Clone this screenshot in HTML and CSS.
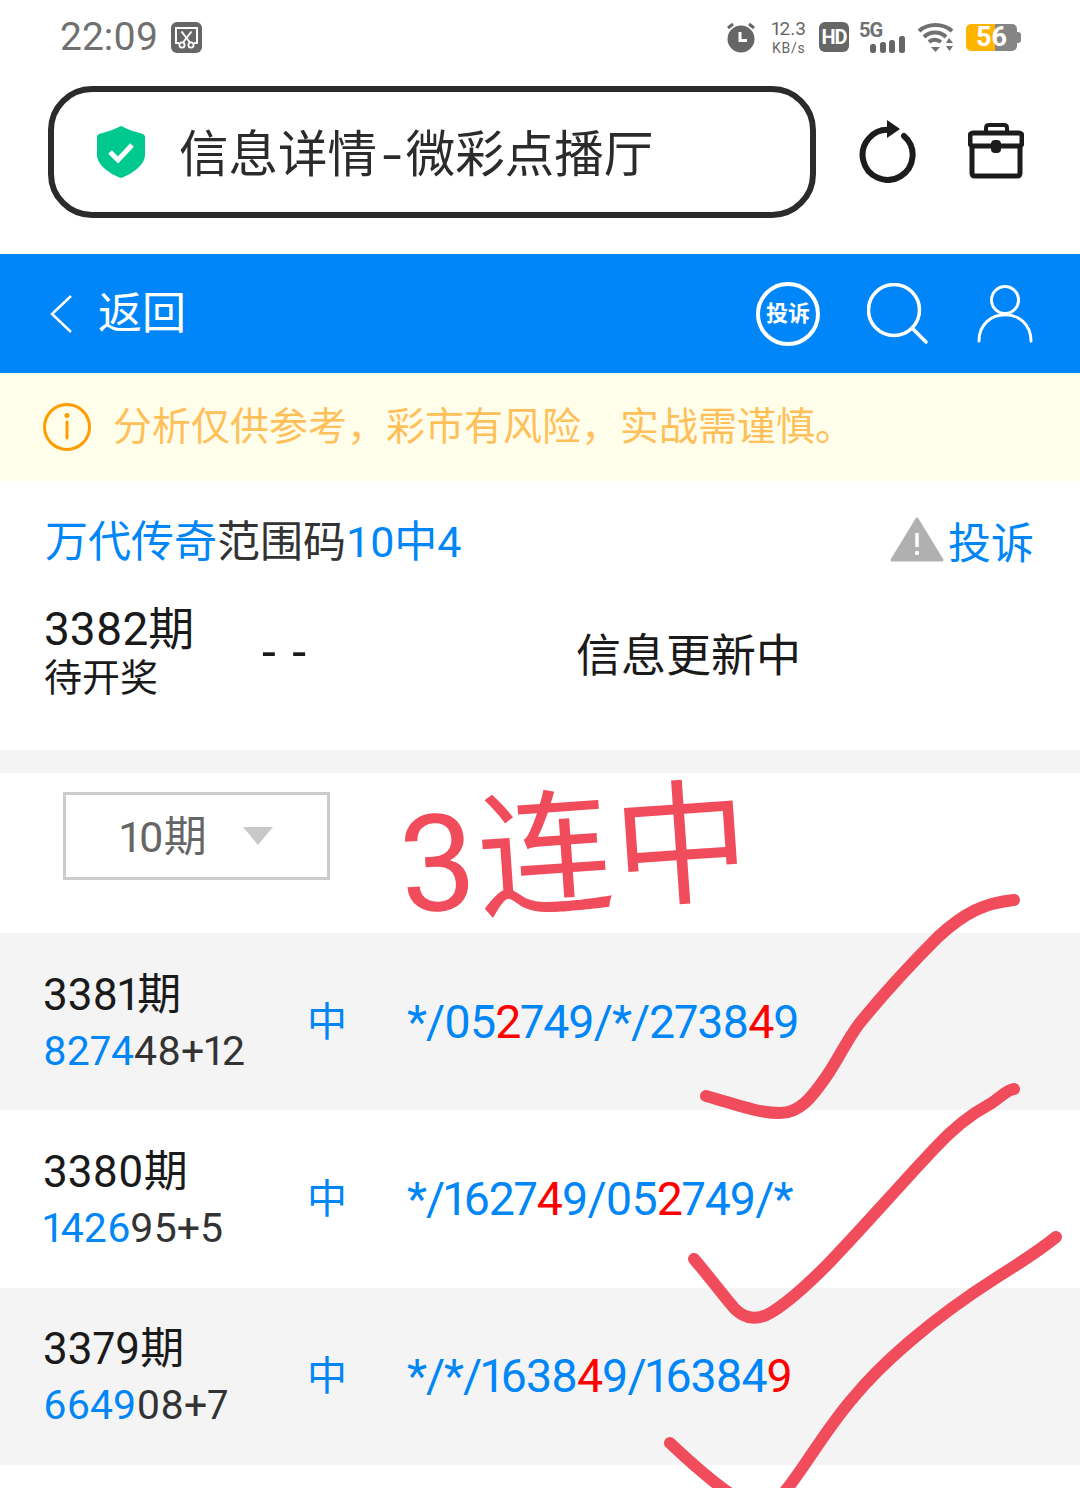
FILE: index.html
```html
<!DOCTYPE html>
<html lang="zh-CN">
<head>
    <meta charset="UTF-8">
    <title>信息详情-微彩点播厅</title>
    <link rel="stylesheet" href="styles.css">
</head>
<body>
<div class="page">
    <header class="status-bar">
        <div class="status-left">
            <span class="clock">22:09</span>
            <svg class="shot-icon" width="31" height="31" viewBox="0 0 31 31">
                <rect width="31" height="31" rx="6" fill="#666"/>
                <path d="M8 21H5V6H26V21H23" fill="none" stroke="#fff" stroke-width="2"/>
                <path d="M10.500 9.500L19 20.500M20.500 9.500L12 20.500" fill="none" stroke="#fff" stroke-width="2"/>
                <circle cx="11" cy="23" r="2.600" fill="#666" stroke="#fff" stroke-width="1.800"/>
                <circle cx="20" cy="23" r="2.600" fill="#666" stroke="#fff" stroke-width="1.800"/>
            </svg>
        </div>
        <div class="status-right">
            <svg width="30" height="32" viewBox="0 0 30 32">
                <path d="M2 7L7 3M28 7L23 3" stroke="#666" stroke-width="3"/>
                <circle cx="15" cy="18" r="13.500" fill="#666"/>
                <path d="M14 11V19.500H21" fill="none" stroke="#fff" stroke-width="3"/>
            </svg>
            <div class="net-speed"><span>12.3</span><span class="unit">KB/s</span></div>
            <span class="hd">HD</span>
            <div class="signal">
                <span class="five-g">5G</span>
                <svg width="36" height="17" viewBox="0 0 36 17">
                    <rect x="0" y="8" width="6" height="9" rx="2.500" fill="#666"/>
                    <rect x="10" y="6" width="6" height="11" rx="2.500" fill="#666"/>
                    <rect x="19" y="4" width="6" height="13" rx="2.500" fill="#666"/>
                    <rect x="29" y="0" width="6" height="17" rx="2.500" fill="#666"/>
                </svg>
            </div>
            <svg width="38" height="30" viewBox="0 0 38 30">
                <path d="M2 9C11 1 26 1 35 9" fill="none" stroke="#707070" stroke-width="4"/>
                <path d="M7 15C13 9 23 9 29 15" fill="none" stroke="#707070" stroke-width="4"/>
                <path d="M12 20C15 17 20 17 24 20" fill="none" stroke="#707070" stroke-width="4"/>
                <path d="M14 25H23L18.500 30Z" fill="#707070"/>
                <path d="M32 16L29 21H36Z M29 24H36L32.500 29Z" fill="#707070"/>
            </svg>
            <div class="battery"><span class="battery-num">56</span></div>
        </div>
    </header>

    <div class="addr-row">
        <div class="addr-box">
            <svg width="48" height="52" viewBox="0 0 48 52">
                <path d="M24 0C30 3 38 6 46 8Q48 9 48 11V29C48 39 35 48 24 52C13 48 0 39 0 29V11Q0 9 2 8C10 6 18 3 24 0Z" fill="#00c98f"/>
                <path d="M13 26L21 34L35 19" fill="none" stroke="#fff" stroke-width="5"/>
            </svg>
            <span class="addr-title">信息详情<span class="addr-dash">-</span>微彩点播厅</span>
        </div>
        <div class="addr-actions">
            <svg width="60" height="64" viewBox="0 0 60 64">
                <path d="M33 11A25 25 0 1 0 47 17" fill="none" stroke="#1c1c1c" stroke-width="6" stroke-linecap="round"/>
                <path d="M30 1L43 10L30 19Z" fill="#1c1c1c"/>
            </svg>
            <svg width="56" height="56" viewBox="0 0 56 56">
                <path d="M18 9V5Q18 2 21 2H36Q39 2 39 5V9" fill="none" stroke="#1c1c1c" stroke-width="4"/>
                <rect x="2" y="10" width="52" height="13" rx="3" fill="none" stroke="#1c1c1c" stroke-width="5"/>
                <path d="M4 22V50Q4 53 7 53H49Q52 53 52 50V22" fill="none" stroke="#1c1c1c" stroke-width="5"/>
                <rect x="23" y="17" width="10" height="13" rx="4" fill="#1c1c1c"/>
            </svg>
        </div>
    </div>

    <nav class="nav">
        <div class="nav-back">
            <svg width="24" height="40" viewBox="0 0 24 40">
                <path d="M22 2L3 20L22 38" fill="none" stroke="#fff" stroke-width="2.500"/>
            </svg>
            <span class="nav-back-text">返回</span>
        </div>
        <div class="nav-icons">
            <span class="complain-badge">投诉</span>
            <svg width="62" height="62" viewBox="0 0 62 62">
                <circle cx="27" cy="27" r="25.500" fill="none" stroke="#fff" stroke-width="3.500"/>
                <path d="M45 45L59 59" stroke="#fff" stroke-width="3.500" stroke-linecap="round"/>
            </svg>
            <svg width="58" height="60" viewBox="0 0 58 60">
                <circle cx="29" cy="16" r="13.500" fill="none" stroke="#fff" stroke-width="3"/>
                <path d="M3 57C3 22 55 22 55 57" fill="none" stroke="#fff" stroke-width="3" stroke-linecap="round"/>
            </svg>
        </div>
    </nav>

    <div class="notice">
        <svg width="50" height="50" viewBox="0 0 50 50">
            <circle cx="25" cy="25" r="22.500" fill="none" stroke="#ff9c00" stroke-width="3"/>
            <circle cx="25" cy="13.500" r="2.500" fill="#ff9c00"/>
            <path d="M25 20V36" stroke="#ff9c00" stroke-width="3" stroke-linecap="round"/>
        </svg>
        <span class="notice-text">分析仅供参考，彩市有风险，实战需谨慎。</span>
    </div>

    <section class="plan">
        <div class="plan-head">
            <h1 class="plan-title"><span class="blue">万代传奇</span>范围码<span class="blue">10中4</span></h1>
            <div class="plan-report">
                <svg width="54" height="46" viewBox="0 0 54 46">
                    <path d="M27 2L52 43H2Z" fill="#b0b0b0" stroke="#b0b0b0" stroke-width="3" stroke-linejoin="round"/>
                    <path d="M27 16V30" stroke="#fff" stroke-width="3.500"/>
                    <circle cx="27" cy="36" r="2.200" fill="#fff"/>
                </svg>
                <span class="blue plan-report-text">投诉</span>
            </div>
        </div>
        <div class="plan-current">
            <div class="plan-issue">
                <div class="issue-no">3382期</div>
                <div class="issue-state">待开奖</div>
            </div>
            <div class="plan-dash">- -</div>
            <div class="plan-msg">信息更新中</div>
        </div>
    </section>

    <section class="filter">
        <div class="select">
            <span class="select-text">10期</span>
            <i class="select-arrow"></i>
        </div>
    </section>

    <section class="rows">
        <div class="row row-gray">
            <div>
                <div class="row-issue">3381期</div>
                <div class="row-open"><span class="blue">8274</span>48+12</div>
            </div>
            <div class="row-hit">中</div>
            <div class="row-code">*/05<em>2</em>749/*/2738<em>4</em>9</div>
        </div>
        <div class="row">
            <div>
                <div class="row-issue">3380期</div>
                <div class="row-open"><span class="blue">1426</span>95+5</div>
            </div>
            <div class="row-hit">中</div>
            <div class="row-code">*/1627<em>4</em>9/05<em>2</em>749/*</div>
        </div>
        <div class="row row-gray">
            <div>
                <div class="row-issue">3379期</div>
                <div class="row-open"><span class="blue">6649</span>08+7</div>
            </div>
            <div class="row-hit">中</div>
            <div class="row-code">*/*/1638<em>4</em>9/16384<em>9</em></div>
        </div>
    </section>

    <div class="scrawl-text">3连中</div>
    <svg class="scrawl" width="1080" height="1488" viewBox="0 0 1080 1488">
        <path d="M706 1096C735 1104 757 1113 780 1113C800 1113 812 1097 826 1077C838 1060 845 1043 859 1024C880 998 910 965 938 937C965 912 985 903 1014 900"/>
        <path d="M694 1259C712 1280 725 1298 735 1309C745 1319 758 1321 772 1312C790 1301 810 1282 826 1266C860 1231 900 1185 934 1149C955 1126 975 1112 990 1104C1000 1098 1006 1090 1014 1089"/>
        <path d="M670 1443C690 1462 710 1480 732 1495M782 1495C800 1475 825 1430 853 1398C880 1365 930 1320 996 1278C1020 1263 1040 1250 1056 1237"/>
    </svg>
</div>
</body>
</html>
```

FILE: styles.css
```css
*{
    box-sizing:border-box;
}
html,body{
    margin:0;
    padding:0;
    background:#fff;
}
.page{
    position:relative;
    width:1080px;
    height:1488px;
    overflow:hidden;
    font-family:Roboto,"Noto Sans CJK SC",sans-serif;
    font-variant-numeric:proportional-nums;
    color:#1a1a1a;
}
.blue{
    color:#0086f7;
}
svg{
    display:block;
    flex:none;
}

/* status bar */
.status-bar{
    height:74px;
    display:flex;
    justify-content:space-between;
    align-items:center;
    padding:0 63px 0 60px;
    color:#666;
}
.status-left{
    display:flex;
    align-items:center;
    gap:13px;
}
.clock{
    font-size:39px;
    line-height:1;
    color:#707070;
}
.status-right{
    display:flex;
    align-items:center;
    gap:11px;
}
.net-speed{
    display:flex;
    flex-direction:column;
    align-items:center;
    margin:3px 2px 0 4px;
    font-size:19px;
    line-height:19px;
}
.net-speed .unit{
    font-size:14px;
    letter-spacing:.7px;
    line-height:20px;
}
.hd{
    width:30px;
    height:30px;
    border-radius:6px;
    background:#666;
    color:#fff;
    font-size:20px;
    font-weight:700;
    letter-spacing:-1px;
    line-height:30px;
    text-align:center;
}
.signal{
    width:46px;
    height:31px;
    position:relative;
}
.signal svg{
    position:absolute;
    right:0;
    bottom:0;
}
.five-g{
    position:absolute;
    left:-1px;
    top:-4px;
    font-size:20px;
    font-weight:700;
    letter-spacing:-1px;
    color:#707070;
}
.battery{
    position:relative;
    width:51px;
    height:27px;
    border-radius:5px;
    background:linear-gradient(to right,#ffb400 57%,#858585 57%);
    text-align:center;
}
.battery::after{
    content:"";
    position:absolute;
    right:-4px;
    top:8px;
    width:4px;
    height:11px;
    border-radius:0 3px 3px 0;
    background:#858585;
}
.battery-num{
    color:#fff;
    font-size:27px;
    font-weight:700;
    line-height:27px;
}

/* address bar */
.addr-row{
    height:180px;
    padding:12px 56px 0 48px;
    display:flex;
    align-items:flex-start;
    justify-content:space-between;
}
.addr-box{
    width:768px;
    height:132px;
    border:6px solid #2b2b2b;
    border-radius:44px;
    display:flex;
    align-items:center;
    gap:34px;
    padding-left:43px;
}
.addr-title{
    font-size:49.500px;
    line-height:60px;
    margin-top:6px;
    color:#2b2b2b;
}
.addr-dash{
    display:inline-block;
    padding:0 7px 0 8px;
    transform:scaleX(1.400);
}
.addr-actions{
    display:flex;
    align-items:center;
    gap:51px;
    padding-top:33px;
}

/* blue nav */
.nav{
    height:119px;
    background:#0086f9;
    color:#fff;
    display:flex;
    justify-content:space-between;
    align-items:center;
    padding:0 46px 0 49px;
}
.nav-back{
    display:flex;
    align-items:center;
    gap:25px;
    font-size:44px;
}
.nav-back-text{
    margin-top:-7px;
}
.nav-icons{
    display:flex;
    align-items:center;
    gap:47px;
}
.complain-badge{
    width:64px;
    height:64px;
    border:4px solid #fff;
    border-radius:50%;
    font-size:22px;
    font-weight:700;
    line-height:56px;
    text-align:center;
}

/* notice */
.notice{
    height:108px;
    background:#fffeeb;
    color:#ffc05a;
    font-size:39px;
    display:flex;
    align-items:center;
    gap:21px;
    padding-left:42px;
}
.notice-text{
    margin-top:-9px;
}

/* plan info */
.plan{
    height:269px;
}
.plan-head{
    display:flex;
    justify-content:space-between;
    align-items:center;
    padding:32px 46px 0 45px;
}
.plan-title{
    margin:0;
    font-size:43px;
    font-weight:400;
    font-variant-numeric:normal;
    line-height:58px;
    color:#333;
}
.plan-report{
    display:flex;
    align-items:center;
    gap:4px;
    font-size:43px;
    height:58px;
}
.plan-report svg{
    margin-top:-4px;
}
.plan-report-text{
    line-height:54px;
    margin-top:4px;
}
.plan-current{
    display:flex;
    align-items:center;
    padding:32px 0 0 44px;
}
.plan-issue{
    width:218px;
}
.issue-no{
    font-size:46px;
    line-height:52px;
}
.issue-state{
    font-size:38px;
    line-height:46px;
}
.plan-dash{
    width:314px;
    font-size:50px;
    letter-spacing:2px;
}
.plan-msg{
    font-size:45px;
}

/* filter */
.filter{
    height:183px;
    border-top:23px solid #f4f4f4;
    padding:19px 0 0 63px;
}
.select{
    width:267px;
    height:88px;
    border:3px solid #ccc;
    display:flex;
    align-items:center;
    padding-left:54px;
    gap:36px;
    font-size:43px;
    color:#666;
}
.select-text{
    margin-top:-6px;
}
.select-arrow{
    width:0;
    height:0;
    border-left:15px solid transparent;
    border-right:15px solid transparent;
    border-top:18px solid #c8c8c8;
}

/* result rows */
.row{
    height:177.330px;
    display:grid;
    grid-template-columns:265px 99px 1fr;
    align-items:center;
    padding-left:43px;
}
.row-gray{
    background:#f4f4f4;
}
.row-issue{
    font-size:44px;
    line-height:56px;
    padding-top:2px;
}
.row-open{
    font-size:41px;
    line-height:56px;
    color:#333;
}
.row-hit{
    font-size:40px;
    line-height:50px;
    margin:2px 0 0 -1px;
    color:#0086f7;
}
.row-code{
    font-size:46.500px;
    letter-spacing:-1.050px;
    color:#0086f7;
}
.row-code em{
    font-style:normal;
    color:#f00;
}

/* marks drawn on top of the screenshot */
.scrawl-text{
    position:absolute;
    left:405px;
    top:792px;
    font-size:135px;
    letter-spacing:2px;
    line-height:150px;
    color:#f04c5c;
    transform:rotate(-4deg);
    transform-origin:left bottom;
    white-space:nowrap;
}
.scrawl{
    position:absolute;
    left:0;
    top:0;
    pointer-events:none;
}
.scrawl path{
    fill:none;
    stroke:#f04c5c;
    stroke-width:12;
    stroke-linecap:round;
    stroke-linejoin:round;
}
```
